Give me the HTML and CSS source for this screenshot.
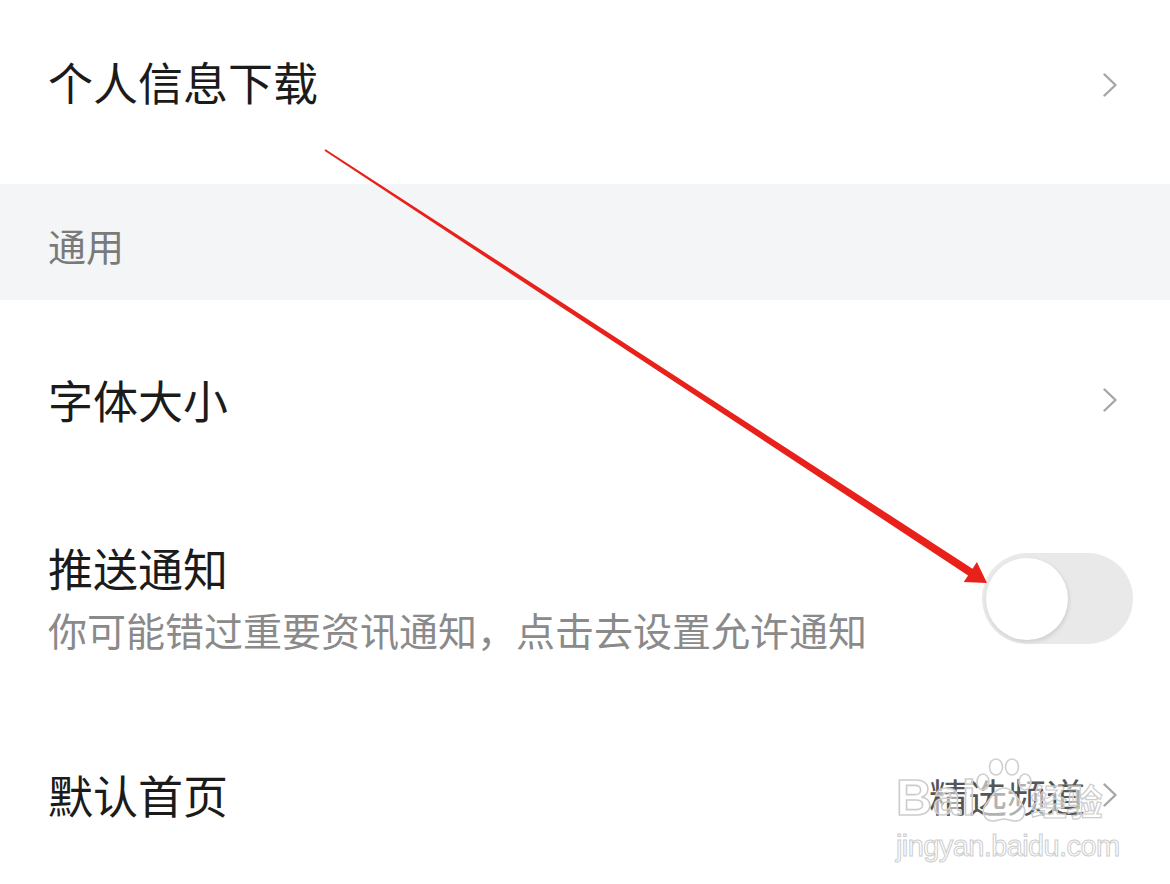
FILE: index.html
```html
<!DOCTYPE html>
<html lang="zh-CN">
<head>
<meta charset="utf-8">
<link rel="stylesheet" href="styles.css">
</head>
<body>
<div class="page">
  <div class="row row-first">
    <div class="title">个人信息下载</div>
    <svg class="chev chev-first" viewBox="0 0 14 24" width="14" height="24"><path d="M1.5 1.5 L12.5 12 L1.5 22.5" fill="none" stroke="#a6a6a6" stroke-width="2.4" stroke-linecap="round" stroke-linejoin="round"/></svg>
  </div>
  <div class="section">通用</div>
  <div class="row">
    <div class="title">字体大小</div>
    <svg class="chev" viewBox="0 0 14 24" width="14" height="24"><path d="M1.5 1.5 L12.5 12 L1.5 22.5" fill="none" stroke="#a6a6a6" stroke-width="2.4" stroke-linecap="round" stroke-linejoin="round"/></svg>
  </div>
  <div class="row row-toggle">
    <div class="texts">
      <div class="title">推送通知</div>
      <div class="sub">你可能错过重要资讯通知，点击去设置允许通知</div>
    </div>
    <div class="toggle"><div class="knob"></div></div>
  </div>
  <div class="row row-last">
    <div class="title">默认首页</div>
    <div class="right">
      <span class="value">精选频道</span>
      <svg class="chev" viewBox="0 0 14 24" width="14" height="24"><path d="M1.5 1.5 L12.5 12 L1.5 22.5" fill="none" stroke="#a6a6a6" stroke-width="2.4" stroke-linecap="round" stroke-linejoin="round"/></svg>
    </div>
  </div>

  <svg class="arrow" width="1170" height="884" viewBox="0 0 1170 884">
    <polygon points="325.55,149.16 972.5,568.8 976.9,562.1 987,583 963.7,582.1 968.1,575.5 324.45,150.84" fill="#e8221b"/>
  </svg>

  <div class="watermark">
    <div class="wm-top">
      <span class="wm-bai">Bai</span>
      <svg class="paw" width="58" height="66" viewBox="0 0 58 66">
        <g fill="rgba(255,255,255,0.55)" stroke="#cfcfcf" stroke-width="1.6">
          <ellipse cx="8" cy="24" rx="6" ry="8"/>
          <ellipse cx="21" cy="9" rx="6.5" ry="8"/>
          <ellipse cx="37" cy="9" rx="6.5" ry="8"/>
          <ellipse cx="50" cy="24" rx="6" ry="8"/>
          <path d="M29 30 C20 30 16 40 11 46 C6 52 8 63 18 63 C23 63 26 61 29 61 C32 61 35 63 40 63 C50 63 52 52 47 46 C42 40 38 30 29 30 Z"/>
        </g>
      </svg>
      <span class="wm-jy">经验</span>
    </div>
    <div class="wm-url">jingyan.baidu.com</div>
  </div>
</div>
</body>
</html>
```

FILE: styles.css
```css
* { box-sizing: border-box; }
html, body { margin: 0; padding: 0; background: #ffffff; }
body {
  font-family: "Noto Sans CJK SC", "Noto Sans", sans-serif;
  color: #1b1b1b;
}
.page {
  position: relative;
  width: 1170px;
  height: 884px;
  overflow: hidden;
  display: flex;
  flex-direction: column;
}
.row {
  display: flex;
  align-items: center;
  justify-content: space-between;
  padding: 0 53px 0 48px;
  height: 200px;
  flex: none;
}
.row-first { height: 184px; padding-bottom: 20px; }
.chev-first { margin-top: 6px; }
.row-last { height: 190px; }
.title {
  font-size: 45px;
  line-height: 60px;
  color: #1b1b1b;
}
.section {
  height: 116px;
  background: #f4f5f7;
  display: flex;
  align-items: center;
  padding: 4px 0 0 48px;
  font-size: 38px;
  color: #7a7a7a;
  flex: none;
}
.chev { display: block; flex: none; }
.row-toggle { padding-right: 37px; padding-bottom: 6px; }
.texts { display: flex; flex-direction: column; }
.sub {
  font-size: 39px;
  line-height: 54px;
  color: #8a8a8a;
  margin-top: 4px;
}
.toggle {
  width: 151px;
  height: 91px;
  border-radius: 46px;
  background: #e9e9e9;
  position: relative;
  flex: none;
  margin-top: 2px;
}
.knob {
  position: absolute;
  left: 4px;
  top: 5px;
  width: 82px;
  height: 82px;
  border-radius: 50%;
  background: #ffffff;
  box-shadow: 1px 2px 4px rgba(0,0,0,0.12);
}
.right { display: flex; align-items: center; gap: 18px; }
.value {
  font-size: 39px;
  line-height: 54px;
  color: #555555;
}
.arrow {
  position: absolute;
  left: 0;
  top: 0;
  pointer-events: none;
}
.watermark {
  position: absolute;
  left: 896px;
  top: 754px;
  width: 215px;
  font-family: "Liberation Sans", Arial, sans-serif;
  pointer-events: none;
}
.wm-top {
  display: flex;
  align-items: flex-end;
  height: 68px;
}
.wm-bai {
  font-size: 50px;
  font-weight: bold;
  line-height: 48px;
  color: rgba(255,255,255,0.5);
  -webkit-text-stroke: 1.6px #cdcdcd;
  letter-spacing: 1px;
}
.paw { display: block; margin: 0 0 -2px -2px; }
.wm-jy {
  font-family: "Noto Sans CJK SC", sans-serif;
  font-size: 36px;
  font-weight: bold;
  line-height: 44px;
  color: rgba(255,255,255,0.5);
  -webkit-text-stroke: 1.2px #cdcdcd;
  margin-left: -2px;
}
.wm-url {
  font-size: 29px;
  line-height: 36px;
  color: rgba(255,255,255,0.5);
  -webkit-text-stroke: 1px #cdcdcd;
  letter-spacing: -0.6px;
  margin-top: 6px;
}
```
